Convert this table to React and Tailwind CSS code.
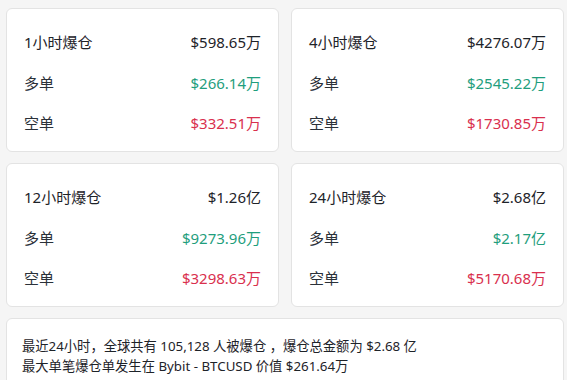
const stats = [
  { title: '1小时爆仓', total: '$598.65万', long: '$266.14万', short: '$332.51万' },
  { title: '4小时爆仓', total: '$4276.07万', long: '$2545.22万', short: '$1730.85万' },
  { title: '12小时爆仓', total: '$1.26亿', long: '$9273.96万', short: '$3298.63万' },
  { title: '24小时爆仓', total: '$2.68亿', long: '$2.17亿', short: '$5170.68万' },
];

function StatCard({ item }) {
  return (
    <div className="h-[144px] rounded-md border border-[#e3e3e3] bg-white px-[17px] pt-[13px]">
      <div className="flex h-[40.5px] items-center justify-between text-[#1e2329]">
        <span>{item.title}</span>
        <span>{item.total}</span>
      </div>
      <div className="flex h-[40.5px] items-center justify-between">
        <span className="text-[#2b3139]">多单</span>
        <span className="text-[#1f9e7d]">{item.long}</span>
      </div>
      <div className="flex h-[40.5px] items-center justify-between">
        <span className="text-[#2b3139]">空单</span>
        <span className="text-[#d9304e]">{item.short}</span>
      </div>
    </div>
  );
}

export default function App() {
  return (
    <div
      className="h-[380px] overflow-hidden bg-[#f5f5f5] pl-[6px] pr-[3px] pt-[8px] text-[15px]"
      style={{ fontFamily: '"Noto Sans", "Noto Sans CJK SC", sans-serif' }}
    >
      <div className="grid grid-cols-2 gap-x-3 gap-y-[11px]">
        {stats.map((item) => (
          <StatCard key={item.title} item={item} />
        ))}
      </div>
      <div className="mt-[11px] h-[100px] rounded-md border border-[#e3e3e3] bg-white px-[15px] pt-[17px] text-[13.3px] leading-5 text-[#1e2329]">
        <p>最近24小时，全球共有 105,128 人被爆仓 ，爆仓总金额为 $2.68 亿</p>
        <p>最大单笔爆仓单发生在 Bybit - BTCUSD 价值 $261.64万</p>
      </div>
    </div>
  );
}
